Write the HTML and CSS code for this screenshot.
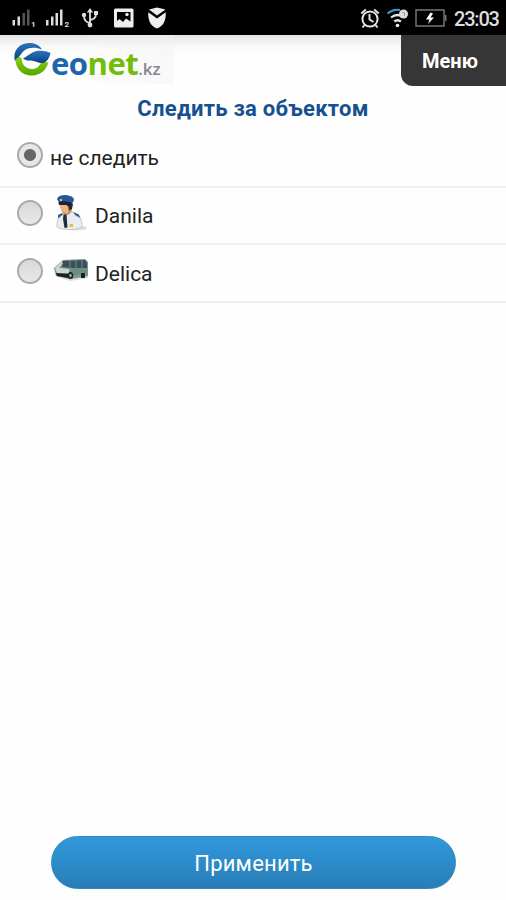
FILE: index.html
```html
<!DOCTYPE html>
<html lang="ru">
<head>
<meta charset="utf-8">
<meta name="viewport" content="width=device-width, initial-scale=1">
<title>Geonet.kz</title>
<link rel="stylesheet" href="styles.css">
</head>
<body>
<div class="status-bar">
  <svg class="status-icons" width="180" height="35" viewBox="0 0 180 35" aria-hidden="true">
    <g fill="#ddd">
      <path d="M12.500 20h2.500v5.500h-2.500zM17.500 16.500h2.500v9h-2.500z"/>
      <path fill="#555" d="M22.500 13h2.500v12.500h-2.500zM27 9.500h2.500v16h-2.500z"/>
      <path d="M46 20h2.500v5.500h-2.500zM51 16.500h2.500v9h-2.500zM55.500 13h2.500v12.500h-2.500zM60 9.500h2.500v16h-2.500z"/>
    </g>
    <text class="sim" x="31" y="26.500">1</text>
    <text class="sim" x="64.500" y="26.500">2</text>
    <g fill="none" stroke="#ddd" stroke-width="1.800">
      <path d="M90 11v14M90 23q-6-1-6-7M90 20q6-1 6-6"/>
    </g>
    <path fill="#ddd" d="M90 8l3.200 4.500h-6.400zM94 11h4v4h-4z"/>
    <circle cx="84" cy="15" r="2.200" fill="#ddd"/><circle cx="90" cy="25" r="2.400" fill="#ddd"/>
    <rect x="114" y="8.500" width="19.500" height="19" rx="1.500" fill="#eee"/>
    <path fill="#000" d="M117 12h13.500v9.500l-4.500-3-3 3.500-3.500-3-2.500 2z"/>
    <circle cx="127" cy="14.500" r="1.700" fill="#eee"/>
    <path fill="#eee" d="M149 9.500l8-2 8.500 2-8.500 6zM148.300 12.300l8.700 6.200 8.700-6.200c.5 8-2.200 14-8.700 16.200-6.500-2.200-9.200-8.200-8.700-16.200z"/>
  </svg>
  <svg class="status-icons" width="96" height="35" viewBox="354 0 96 35" aria-hidden="true">
    <g fill="none" stroke="#e4e4e4" stroke-width="2">
      <circle cx="370" cy="19" r="7.600"/>
      <path d="M369.500 14v5.500l4 2.500M361.300 13.500l4.500-4M378.700 13.500l-4.500-4M364.500 25l-2 2.500M375.500 25l2 2.500"/>
      <path d="M391 17.500q6.500-5 13 0M394.300 21.500q3.300-2.500 6.600 0" stroke-width="2.200"/>
      <path stroke="#399dc6" d="M387.500 13.500q6-5 12.500-3.500"/>
    </g>
    <circle cx="397.500" cy="25.500" r="1.800" fill="#eee"/>
    <circle cx="403.500" cy="14" r="4.500" fill="#ddd"/>
    <path d="M402 12l2.500 1v3" stroke="#999" fill="none"/>
    <rect x="416" y="10" width="28" height="16" fill="none" stroke="#777" stroke-width="1.500"/>
    <path fill="#777" d="M445 15h1.500v6h-1.500z"/>
    <path fill="#fff" d="M430.500 12.500l-4.500 7h3.500l-1.500 4.500 6-6.500h-3.500l2.500-4z"/>
  </svg>
  <span class="clock">23:03</span>
</div>
<header class="header">
  <div class="brand">
    <svg class="brand-mark" width="38" height="36" viewBox="13 41 38 36" aria-hidden="true">
      <defs>
        <linearGradient id="leaf" x1="0" y1="0" x2="0" y2="1"><stop offset="0" stop-color="#91d613"/><stop offset="1" stop-color="#56a500"/></linearGradient>
        <linearGradient id="sea" x1="0" y1="0" x2="0" y2="1"><stop offset="0" stop-color="#2a75bb"/><stop offset="1" stop-color="#0a3f88"/></linearGradient>
      </defs>
      <path fill="url(#leaf)" d="M15.500 55C14 67 21 75.500 32 75.500c8 0 14-5 16.500-13l-7-1c-2 5-5 7.500-9.500 7.500-6 0-10-4-10.500-11z"/>
      <path fill="url(#sea)" d="M15 61C12 50 20 42.500 31 43c5 .3 9 3 11 6.500-6-2.500-13-2-17 .5-4 3-4.500 6-7 7.500-1.500 1-2.500 2-3 3.500z"/>
      <path fill="url(#sea)" d="M23 58.500C28 56 31 52 37 51c5-.8 9 0 13.500 2-1 5-3.500 9-7.500 10-5 .5-8-2.500-12-2.500-4 .3-6-.5-8-2z"/>
    </svg>
    <span class="brand-name"><span class="brand-eo">eo</span><span class="brand-net">net</span></span><span class="brand-zone">.kz</span>
  </div>
  <div class="menu">Меню</div>
</header>
<main class="page">
  <h1 class="title">Следить за объектом</h1>
  <div class="list">
    <label class="row row-first"><span class="radio radio-on"></span><span class="label label-none">не следить</span></label>
    <label class="row"><span class="radio"></span>
      <svg class="avatar" width="36" height="38" viewBox="0 0 36 38" aria-hidden="true">
        <ellipse cx="23" cy="34" rx="11" ry="2.500" fill="#ddd"/>
        <path fill="#e9edf2" stroke="#a9b0b8" stroke-width=".6" d="M4 33c0-7 1-11 6-13l9-2c6 2 10 4 10 15-5 3-19 4-25 0z"/>
        <path fill="#375d98" d="M5 21l4-2 1 1.500-5 4zM20 18l6 2.500 1 3.500-5-3z"/>
        <path fill="#c48256" d="M7 10h12v6q-2 5-6 5-5-1-6-11z"/>
        <path fill="#efb480" d="M6.500 10h8l1 9q-5 2-8-5z"/>
        <path fill="#292a31" d="M15 8l5 2-1 5-3 1z"/>
        <path fill="#285894" d="M4 5q1-4 9-4 8 1 8 5l-2 4H7z"/>
        <path fill="#182437" d="M5.500 8q8-2 13.500 1l-2 4-4-2H6z"/>
        <path fill="#dcc66b" d="M7 5h2v2H7z"/>
        <path fill="#222b3b" d="M10.500 20.500h3l1 13-3 .5-1.500-9z"/>
        <path fill="#e8b84b" d="M16.500 30h3.500v3h-3.500z"/>
      </svg>
      <span class="label">Danila</span></label>
    <label class="row"><span class="radio"></span>
      <svg class="avatar" width="36" height="38" viewBox="0 0 36 38" aria-hidden="true">
        <path fill="#ddd" d="M3 25l14 5 18-3v-3z"/>
        <path fill="#82928e" d="M1 17l9-8 22-1 3 3v14l-17 3L3 25z"/>
        <path fill="#375158" d="M10 10l22-1 2 3v5H17l-8-1z"/>
        <path fill="#c8d5d2" d="M2 17l6-6 2 1-4 5 10 1v4L4 22z"/>
        <path fill="#6d8e80" d="M17 17h17v5l-16 3z"/>
        <path stroke="#8da3a3" stroke-width=".7" d="M17 9v9M23 9v8M29 9v8"/>
        <path fill="#192421" d="M3 22l12 1v4L4 25zM28 22h4v5h-4z"/>
        <ellipse cx="17.500" cy="24.500" rx="2.700" ry="3.500" fill="#1b2321"/>
        <ellipse cx="17.500" cy="24.500" rx="1.200" ry="1.800" fill="#aab5b1"/>
      </svg>
      <span class="label">Delica</span></label>
  </div>
</main>
<footer class="footer"><button class="apply" type="button">Применить</button></footer>
</body>
</html>
```
FILE: styles.css
```css
* { box-sizing: border-box; }
body {
  margin: 0;
  height: 900px;
  overflow: hidden;
  display: flex;
  flex-direction: column;
  background: #fefefe;
  color: #222;
  font-family: Roboto, "Open Sans", sans-serif;
}
.status-bar {
  height: 35px;
  flex: none;
  display: flex;
  background: #000;
}
.status-icons { display: block; }
.status-icons + .status-icons { margin-left: 174px; }
.sim { font: bold 8px Roboto, sans-serif; fill: #ddd; }
.clock {
  margin-left: 4px;
  font-size: 20px;
  font-weight: 500;
  line-height: 38px;
  letter-spacing: -1.2px;
  color: #ddd;
}
.header {
  height: 51px;
  flex: none;
  display: flex;
  justify-content: space-between;
  background: linear-gradient(#e5e5e5, #fafafa 12px, #fefefe 24px);
}
.brand {
  width: 174px;
  height: 49px;
  padding: 6px 0 0 13px;
  display: flex;
  background: linear-gradient(100deg, #fff0 40%, #f2f2f280);
}
.brand-mark { flex: none; }
.brand-name {
  font: bold 31px/36px "Open Sans", sans-serif;
  letter-spacing: -.5px;
  margin-top: 4px;
}
.brand-eo { color: #1d65ad; }
.brand-net { color: #72bd0b; }
.brand-zone {
  font: 600 17px/34px "Open Sans", sans-serif;
  margin-top: 11px;
  color: #85878b;
}
.menu {
  width: 105px;
  height: 51px;
  padding-left: 21px;
  border-radius: 0 0 0 12px;
  background: #363636;
  color: #fff;
  font-size: 20px;
  font-weight: 700;
  line-height: 53px;
}
.page { flex: 1; }
.title {
  margin: 0;
  height: 43px;
  font-size: 22px;
  font-weight: 700;
  line-height: 45px;
  letter-spacing: .27px;
  text-align: center;
  color: #165091;
}
.row {
  height: 57.5px;
  padding: 0 0 0 17px;
  display: flex;
  align-items: center;
  border-bottom: 2px solid #edf1f2;
}
.row-first { height: 58.500px; }
.radio {
  width: 26px;
  height: 26px;
  flex: none;
  margin-top: -4px;
  border: 2px solid #aaa;
  border-radius: 50%;
  background: linear-gradient(#d8d8d8, #e8e8e8);
}
.radio-on { background: radial-gradient(circle, #666 0 5.500px, #e7e7e7 6.500px); }
.label { margin: 2px 0 0 6px; font-size: 21px; line-height: 28px; }
.label-none { margin-left: 7px; }
.avatar { margin: -5px 0 0 10px; flex: none; }
.footer {
  height: 64px;
  flex: none;
  padding: 0 50px 0 51px;
}
.apply {
  display: block;
  width: 100%;
  height: 53px;
  padding: 2px 0 0;
  border: 1px solid #3189c0;
  border-radius: 27px;
  background: linear-gradient(#3099dc, #287db6);
  color: #fff;
  font: 22px Roboto, "Open Sans", sans-serif;
  letter-spacing: .2px;
}
```
